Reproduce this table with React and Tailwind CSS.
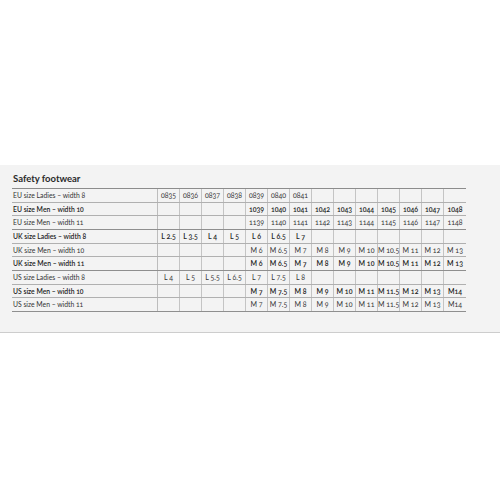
const rows = [
  { label: "EU size Ladies – width 8", bold: false, values: ["0835", "0836", "0837", "0838", "0839", "0840", "0841", "", "", "", "", "", "", ""] },
  { label: "EU size Men – width 10", bold: true, values: ["", "", "", "", "1039", "1040", "1041", "1042", "1043", "1044", "1045", "1046", "1047", "1048"] },
  { label: "EU size Men – width 11", bold: false, values: ["", "", "", "", "1139", "1140", "1141", "1142", "1143", "1144", "1145", "1146", "1147", "1148"], group: true },
  { label: "UK size Ladies – width 8", bold: true, values: ["L 2.5", "L 3.5", "L 4", "L 5", "L 6", "L 6.5", "L 7", "", "", "", "", "", "", ""] },
  { label: "UK size Men – width 10", bold: false, values: ["", "", "", "", "M 6", "M 6.5", "M 7", "M 8", "M 9", "M 10", "M 10.5", "M 11", "M 12", "M 13"] },
  { label: "UK size Men – width 11", bold: true, values: ["", "", "", "", "M 6", "M 6.5", "M 7", "M 8", "M 9", "M 10", "M 10.5", "M 11", "M 12", "M 13"], group: true },
  { label: "US size Ladies – width 8", bold: false, values: ["L 4", "L 5", "L 5.5", "L 6.5", "L 7", "L 7.5", "L 8", "", "", "", "", "", "", ""] },
  { label: "US size Men – width 10", bold: true, values: ["", "", "", "", "M 7", "M 7.5", "M 8", "M 9", "M 10", "M 11", "M 11.5", "M 12", "M 13", "M14"] },
  { label: "US size Men – width 11", bold: false, values: ["", "", "", "", "M 7", "M 7.5", "M 8", "M 9", "M 10", "M 11", "M 11.5", "M 12", "M 13", "M14"], group: true },
];

export default function App() {
  return (
    <div className="w-[500px] h-[500px] bg-white pt-[165px] font-['Lato','Liberation_Sans',sans-serif]">
      {/* panel */}
      <div className="bg-[#f3f3f3] border-b border-[#cdcdcd] pl-3 pt-[7px] pb-[20px]">
        <h2 className="text-[9.5px] leading-[13px] font-bold text-[#2a2a2a] pl-px mb-[3px]">
          Safety footwear
        </h2>

        <div className="w-[454px] border-t border-[#8c8c8c] oldstyle-nums">
          {rows.map((row, i) => (
            <div
              key={i}
              className={`flex h-[13.67px] border-b ${row.group ? "border-[#8f8f8f]" : "border-[#b0b0b0]"} ${row.bold ? "font-semibold text-[#222]" : "font-normal text-[#333]"}`}
            >
              <div className="w-[146px] shrink-0 border-r border-[#bdbdbd] pl-px text-[6.8px] leading-[12.67px] whitespace-nowrap">
                {row.label}
              </div>
              {row.values.map((v, j) => (
                <div
                  key={j}
                  className={`w-[22px] shrink-0 text-center text-[7px] leading-[12.67px] whitespace-nowrap ${j < 13 ? "border-r border-[#c4c4c4]" : ""}`}
                >
                  {v}
                </div>
              ))}
            </div>
          ))}
        </div>
      </div>
    </div>
  );
}
